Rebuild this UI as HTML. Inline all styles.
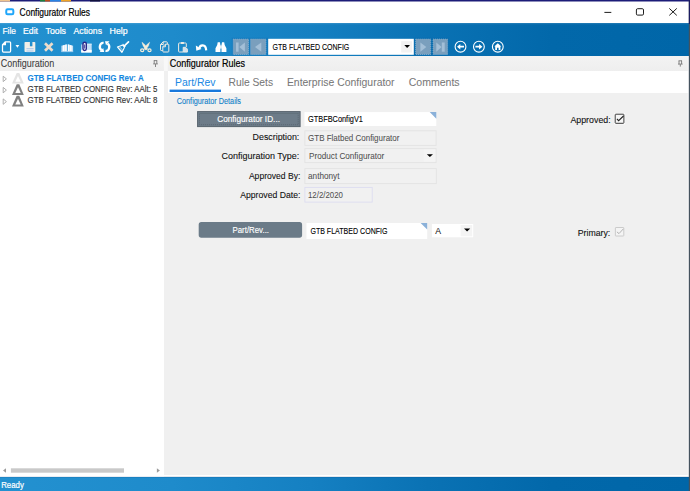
<!DOCTYPE html>
<html>
<head>
<meta charset="utf-8">
<title>Configurator Rules</title>
<style>
html,body{margin:0;padding:0;}
body{width:690px;height:491px;overflow:hidden;position:relative;background:#f0f0f0;font-family:"Liberation Sans",sans-serif;}
.a{position:absolute;}
#title{left:0;top:0;width:690px;height:23.5px;background:#fff;}
#blue{left:0;top:23.3px;width:690px;height:32.4px;background:linear-gradient(90deg,#2391d0 0%,#1e8bcb 25%,#1580c2 45%,#0a72b4 62%,#0268aa 80%,#0066a8 100%);}
#status{left:0;top:476.5px;width:690px;height:14.5px;background:linear-gradient(90deg,#2391d0 0%,#1e8bcb 25%,#1580c2 45%,#0a72b4 62%,#0268aa 80%,#0066a8 100%);}
#hdr{left:0;top:55.7px;width:690px;height:15.3px;background:linear-gradient(180deg,#f3f3f3,#eeeeee);}
#leftp{left:0;top:71px;width:163.9px;height:405.5px;background:#fff;}
#tabs{left:168px;top:71px;width:522px;height:22.2px;background:#fff;}
#svg{left:0;top:0;}
</style>
</head>
<body>
<div id="title" class="a"></div>
<div id="blue" class="a"></div>
<div id="hdr" class="a"></div>
<div id="leftp" class="a"></div>
<div id="tabs" class="a"></div>
<div id="status" class="a"></div>

<svg id="svg" class="a" width="690" height="491" viewBox="0 0 690 491">
<!-- desktop strip at top -->
<g id="desk">
<rect x="0" y="0" width="690" height="1.5" fill="#1c1c78"/>
<rect x="0" y="0" width="10" height="1.5" fill="#f0c48c"/>
<rect x="40" y="0" width="5" height="1.5" fill="#20803c"/>
<rect x="45" y="0" width="5" height="1.5" fill="#b8501c"/>
<rect x="50" y="0" width="11" height="1.5" fill="#2a84e4"/>
<rect x="61" y="0" width="10" height="1.5" fill="#f0a424"/>
<rect x="90" y="0" width="10" height="1.5" fill="#10103c"/>
</g>
<!-- right edge strip -->

<rect x="0" y="23.3" width="690" height="0.9" fill="#fff" opacity="0.16"/>
<!-- title icon -->
<rect x="6.25" y="9.35" width="7.1" height="4.9" rx="1.3" fill="#fff" stroke="#1fa6fa" stroke-width="2.0"/>
<!-- window controls -->
<g stroke="#111" stroke-width="0.95" fill="none">
<path d="M604.4 12.4H611.3"/>
<rect x="636.4" y="8.7" width="7.1" height="6.4" rx="1.2"/>
<path d="M669.3 8.4L676.8 15.4M676.8 8.4L669.3 15.4"/>
</g>

<!-- TOOLBAR ICONS -->
<g id="tb">
<!-- new -->
<path d="M5.4 41.8H9.6Q10.6 41.8 10.6 42.8V51Q10.6 52 9.6 52H3.5Q2.5 52 2.5 51V44.7Z M5.4 41.8V44.7H2.5" fill="none" stroke="#fff" stroke-width="1.25" stroke-linejoin="round"/>
<path d="M15.5 45.1H19.3L17.4 47.8Z" fill="#fff"/>
<!-- save -->
<g>
<rect x="24.5" y="42" width="10.8" height="10.1" rx="0.8" fill="#f2eee7"/>
<rect x="29.9" y="42" width="2.5" height="4.3" fill="#238fce"/>
<rect x="26.4" y="47.7" width="7.2" height="4.4" fill="#eef3f8"/>
<path d="M26.4 48.7H33.6M26.4 51H33.6" stroke="#a3c4e3" stroke-width="1.1"/>
</g>
<!-- delete X -->
<path d="M45 43.3L52.5 50.8M52.5 43.3L45 50.8" stroke="#eddccb" stroke-width="2.7" fill="none"/>
<!-- book -->
<g>
<path d="M61.4 45.7L66.9 44.2V51.3H61.4Z" fill="#c4e0f6"/>
<path d="M73.1 45.7L67.6 44.2V51.3H73.1Z" fill="#c4e0f6"/>
<path d="M63 45.4L64.5 45V51.2H63Z M65.2 44.8L66.6 44.5V51.2H65.2Z M68 44.5L69.4 44.8V51.2H68Z M70.1 45L71.6 45.4V51.2H70.1Z" fill="#fff"/>
<rect x="61.2" y="51.2" width="12" height="0.9" fill="#b4d6f2"/>
</g>
<!-- attachment -->
<g>
<rect x="81.2" y="44.4" width="10.5" height="8.1" fill="#c4dff7"/>
<rect x="87" y="43.6" width="4.7" height="1.2" fill="#e8f2fb"/>
<rect x="81.2" y="49.9" width="10.5" height="2.6" fill="#fff"/>
<rect x="83" y="42.2" width="3.3" height="8.3" rx="1.65" fill="#fff" stroke="#26268c" stroke-width="1.4"/>
<path d="M84.65 44.5V48.6" stroke="#29298e" stroke-width="0.9"/>
</g>
<!-- refresh -->
<g fill="none" stroke="#fff" stroke-width="2.3">
<path d="M103.6 42.9A3.3 3.9 0 0 0 101.6 50.2"/>
<path d="M105.5 50.9A3.3 3.9 0 0 0 107.5 43.6"/>
</g>
<path d="M99.6 52H104.2L103.2 48Z" fill="#fff"/>
<path d="M105 41.3H109.5L106 45.3Z" fill="#fff"/>
<!-- broom -->
<g fill="none" stroke="#fff" stroke-linecap="round" stroke-linejoin="round">
<path d="M128.5 41.9L124.6 45.7" stroke-width="1.7"/>
<path d="M123.2 44.2L125.4 46.6L124.4 47.6L122.2 45.2Z" fill="#fff" stroke-width="0.6"/>
<path d="M122.2 45.2L117.4 46.9L121.9 52.4L124.4 47.6" stroke-width="1.1"/>
<path d="M120.3 47.2L122.8 50.2M118.9 47.1L121.7 50.6" stroke-width="0.6" opacity="0.8"/>
</g>
<!-- scissors -->
<g fill="none" stroke="#f5edda">
<path d="M141.9 42Q145.2 44 147.7 49L146.2 49.9Q142.5 46.6 141.9 42Z" fill="#f5edda" stroke-width="0.3"/>
<path d="M149.8 42Q146.5 44 144 49L145.5 49.9Q149.2 46.6 149.8 42Z" fill="#f5edda" stroke-width="0.3"/>
<ellipse cx="142.2" cy="50.3" rx="1.6" ry="1.4" stroke-width="1.15"/>
<ellipse cx="149.5" cy="50.3" rx="1.6" ry="1.4" stroke-width="1.15"/>
</g>
<!-- copy -->
<g fill="none" stroke="#f1ece3" stroke-width="1" stroke-linejoin="round">
<path d="M163.2 41.8H166.6Q167.3 41.8 167.3 42.5V44 M160.5 44.5L163.2 41.8V44.5H160.5V49.8Q160.5 50.5 161.2 50.5H162.6"/>
<path d="M165.4 44.2H168.1Q168.8 44.2 168.8 44.9V51.3Q168.8 52 168.1 52H163.5Q162.8 52 162.8 51.3V46.8Z M165.4 44.2V46.8H162.8"/>
</g>
<!-- paste -->
<g fill="none" stroke="#f1ece3" stroke-width="1" stroke-linejoin="round">
<path d="M183 52H179.3Q178.6 52 178.6 51.3V43.7Q178.6 43 179.3 43H185.6Q186.3 43 186.3 43.7V47"/>
<rect x="180.9" y="41.9" width="3.1" height="2" rx="0.6" fill="#f1ece3" stroke="none"/>
<path d="M183.2 47.3H185.6L187.4 49.1V52.1H183.2Z" fill="#cfe2f2" stroke-width="0.9"/>
</g>
<!-- undo -->
<path d="M199.2 48.8C199.8 44.4 205.8 43.4 206.2 50.4" fill="none" stroke="#fff" stroke-width="2.2"/>
<path d="M195.8 45.6L201.6 48.9L196.3 50.7Z" fill="#fff"/>
<!-- binoculars -->
<g fill="#fff">
<path d="M217.7 42.3H219.9L220.4 45V52H215.5V48.2L217.2 45Z"/>
<path d="M222 42.3H224.2L224.7 45L226.4 48.2V52H221.5V45Z"/>
<rect x="220.2" y="45.4" width="1.5" height="3.2"/>
</g>
<!-- nav backing -->
<rect x="231.8" y="37.8" width="36.4" height="17.9" fill="#1173b6" opacity="0.55"/>
<rect x="413.8" y="37.8" width="35.2" height="17.9" fill="#0b6aac" opacity="0.55"/>
<!-- nav buttons -->
<g fill="#7a9fbd" stroke="#93b7d3" stroke-width="0.8" stroke-dasharray="1 1">
<rect x="233.2" y="39.1" width="15.3" height="15.4"/>
<rect x="250.6" y="39.1" width="15.3" height="15.4"/>
<rect x="415.7" y="39.1" width="15" height="15.4"/>
<rect x="433.1" y="39.1" width="14.5" height="15.4"/>
</g>
<g fill="#a3bfd7">
<rect x="236" y="42.5" width="2.6" height="9.2"/>
<path d="M244.9 42.5V51.7L239.3 47.1Z"/>
<path d="M261.3 42.5V51.7L255 47.1Z"/>
<path d="M420.4 42.5V51.7L426.3 47.1Z"/>
<path d="M436.3 42.5V51.7L441.6 47.1Z"/>
<rect x="441.8" y="42.5" width="2.9" height="9.2"/>
</g>
<!-- combo -->
<rect x="268.2" y="38.8" width="145.6" height="16" fill="#fff"/>
<rect x="401.2" y="41.2" width="10.8" height="11.3" fill="#f2f2f2"/>
<path d="M404.3 45H410L407.15 48Z" fill="#000"/>
<!-- circles -->
<g fill="none" stroke="#fff" stroke-width="1.1">
<circle cx="460.5" cy="46.7" r="5.4"/>
<circle cx="478.9" cy="46.7" r="5.4"/>
<circle cx="497.8" cy="46.7" r="5.4"/>
</g>
<path d="M457 46.7L460.3 43.9V45.8H464V47.6H460.3V49.5Z" fill="#fff"/>
<path d="M482.4 46.7L479.1 43.9V45.8H475.4V47.6H479.1V49.5Z" fill="#fff"/>
<path d="M497.8 43.2L501.3 46.4H500.4V50H498.6V47.8H497V50H495.2V46.4H494.3Z" fill="#fff"/>
</g>

<!-- header pins -->
<rect x="163.9" y="56" width="3.9" height="15" fill="#f8f8f8"/>
<g fill="none" stroke="#6a6a6a" stroke-width="0.8">
<path d="M154.2 60.6V63.8M156.8 60.6V63.8M153.8 60.6H157.2M153.2 63.9H157.8M155.5 64.1V67"/>
<path d="M679 60.8V64M681.6 60.8V64M678.6 60.8H682M678 64.1H682.6M680.3 64.3V66.6"/>
</g>

<!-- tree -->
<g fill="none" stroke="#a6a6a6" stroke-width="0.9" stroke-linejoin="round">
<path d="M3.2 76.2V81.6L6.4 78.9Z"/>
<path d="M3.2 87.4V92.8L6.4 90.1Z"/>
<path d="M3.2 98.9V104.3L6.4 101.6Z"/>
</g>
<g>
<path d="M16.7 73.1H19.3L23.8 83.6H12Z" fill="#e4e4e4"/><path d="M18 76.1L20.7 81.7H15.3Z" fill="#fff"/>
<path d="M16.7 84.2H19.3L23.8 94.9H12Z" fill="#808080"/><path d="M18 87.2L20.7 93.0H15.3Z" fill="#fff"/>
<path d="M16.7 95.8H19.3L23.8 106.5H12Z" fill="#808080"/><path d="M18 98.8L20.7 104.6H15.3Z" fill="#fff"/>
</g>

<!-- tab underline -->
<rect x="169.6" y="89.6" width="51.4" height="2.4" fill="#1878dc"/>

<!-- form: button 1 -->
<rect x="197.6" y="111.6" width="102.5" height="15" fill="#6d7c89" stroke="#57636d" stroke-width="1"/>
<rect x="199.5" y="113.5" width="98.7" height="11.2" fill="none" stroke="#3c444c" stroke-width="0.6" stroke-dasharray="1 1" opacity="0.6"/>
<!-- fields -->
<rect x="304.5" y="112.1" width="131.8" height="13.9" fill="#fff"/>
<path d="M429.7 112.1H436.3V118.8Z" fill="#8bb1d9"/>
<rect x="304.9" y="130.8" width="131.2" height="14.6" fill="#f1f1f1" stroke="#e3e3e3" stroke-width="0.9"/>
<rect x="304.9" y="148.6" width="131.2" height="14" fill="#f1f1f1" stroke="#e3e3e3" stroke-width="0.9"/>
<rect x="423.7" y="149.6" width="11.6" height="12" fill="#f4f4f4"/>
<path d="M426.8 154.2H433L429.9 157Z" fill="#000"/>
<rect x="304.9" y="168.6" width="131.4" height="15" fill="#f1f1f1" stroke="#e3e3e3" stroke-width="0.9"/>
<rect x="304.9" y="187.4" width="67.3" height="14.7" fill="#f1f1f1" stroke="#dcdcf0" stroke-width="0.9"/>
<!-- button 2 -->
<rect x="198.7" y="222.1" width="103.4" height="15.6" rx="2.6" fill="#6b7b88"/>
<rect x="306.5" y="223" width="120.7" height="16" fill="#fff"/>
<path d="M420.6 223H427.2V229.6Z" fill="#8bb1d9"/>
<rect x="431.9" y="224" width="41.3" height="13.3" fill="#fff"/>
<rect x="460.6" y="225" width="11.6" height="11.3" fill="#f4f4f4"/>
<path d="M464 228.6H470.2L467.1 231.4Z" fill="#000"/>
<!-- checkboxes -->
<rect x="613.9" y="112.9" width="11.3" height="11.7" rx="1" fill="#fff" opacity="0.85"/>
<rect x="615.2" y="114.2" width="8.7" height="9.1" rx="0.6" fill="#f6f6f6" stroke="#3a3a3a" stroke-width="1"/>
<path d="M616.9 118.9L618.6 120.7L623.5 116" fill="none" stroke="#222" stroke-width="1.05"/>
<rect x="615.4" y="227.5" width="8.4" height="8.5" rx="0.5" fill="#f4f4f4" stroke="#c6c6c6" stroke-width="0.9"/>
<path d="M616.9 231.9L619 233.6L623.3 228.9" fill="none" stroke="#b4b4b4" stroke-width="1"/>

<!-- scrollbar -->
<rect x="10.9" y="468.3" width="113.1" height="4.4" fill="#c9c9c9"/>
<path d="M6 468.2V472.8L3 470.5Z" fill="#9c9c9c"/>
<path d="M156.9 468.2V472.8L159.9 470.5Z" fill="#9c9c9c"/>
<!-- status top line -->
<rect x="164" y="475" width="525" height="1.6" fill="#fff"/>
<rect x="687.8" y="56" width="1" height="420.6" fill="#fff"/>
<rect x="0" y="476.6" width="690" height="0.9" fill="#003070" opacity="0.22"/>
<rect x="688.8" y="0" width="1.2" height="491" fill="#45525e"/>
<rect x="688.8" y="0" width="1.2" height="24" fill="#1c1c60"/>
</svg>


<svg class="a" style="left:0;top:0" width="690" height="491" viewBox="0 0 690 491" font-family="Liberation Sans, sans-serif">
<text x="19.6" y="15.5" font-size="10.4" fill="#000" textLength="70.4" lengthAdjust="spacingAndGlyphs" stroke="#000" stroke-width="0.2">Configurator Rules</text>
<text x="2.5" y="34.0" font-size="9.8" fill="#fff" textLength="13.5" lengthAdjust="spacingAndGlyphs" stroke="#fff" stroke-width="0.22">File</text>
<text x="23.0" y="34.0" font-size="9.8" fill="#fff" textLength="15.0" lengthAdjust="spacingAndGlyphs" stroke="#fff" stroke-width="0.22">Edit</text>
<text x="45.5" y="34.0" font-size="9.8" fill="#fff" textLength="20.5" lengthAdjust="spacingAndGlyphs" stroke="#fff" stroke-width="0.22">Tools</text>
<text x="73.6" y="34.0" font-size="9.8" fill="#fff" textLength="28.4" lengthAdjust="spacingAndGlyphs" stroke="#fff" stroke-width="0.22">Actions</text>
<text x="109.6" y="34.0" font-size="9.8" fill="#fff" textLength="18.1" lengthAdjust="spacingAndGlyphs" stroke="#fff" stroke-width="0.22">Help</text>
<text x="272.5" y="49.8" font-size="8.4" fill="#000" textLength="76.8" lengthAdjust="spacingAndGlyphs" stroke="#000" stroke-width="0.1">GTB FLATBED CONFIG</text>
<text x="0.8" y="66.8" font-size="10.5" fill="#3c3c3c" textLength="53.5" lengthAdjust="spacingAndGlyphs" stroke="#3c3c3c" stroke-width="0.08">Configuration</text>
<text x="169.8" y="66.8" font-size="10.3" fill="#000" textLength="75.2" lengthAdjust="spacingAndGlyphs" stroke="#000" stroke-width="0.2">Configurator Rules</text>
<text x="27.5" y="80.8" font-size="9.4" fill="#1487e0" textLength="116.2" lengthAdjust="spacingAndGlyphs" font-weight="700" stroke="#1487e0" stroke-width="0.1">GTB FLATBED CONFIG Rev: A</text>
<text x="27.5" y="92.1" font-size="9.4" fill="#333" textLength="130.0" lengthAdjust="spacingAndGlyphs" stroke="#333" stroke-width="0.15">GTB FLATBED CONFIG Rev: AAlt: 5</text>
<text x="27.5" y="103.4" font-size="9.4" fill="#333" textLength="130.0" lengthAdjust="spacingAndGlyphs" stroke="#333" stroke-width="0.15">GTB FLATBED CONFIG Rev: AAlt: 8</text>
<text x="175.0" y="86.2" font-size="11.1" fill="#2088e4" textLength="40.5" lengthAdjust="spacingAndGlyphs" stroke="#2088e4" stroke-width="0.02">Part/Rev</text>
<text x="228.5" y="86.2" font-size="11.1" fill="#787878" textLength="44.6" lengthAdjust="spacingAndGlyphs" stroke="#787878" stroke-width="0.05">Rule Sets</text>
<text x="286.9" y="86.2" font-size="11.1" fill="#787878" textLength="107.7" lengthAdjust="spacingAndGlyphs" stroke="#787878" stroke-width="0.05">Enterprise Configurator</text>
<text x="408.7" y="86.2" font-size="11.1" fill="#787878" textLength="50.9" lengthAdjust="spacingAndGlyphs" stroke="#787878" stroke-width="0.05">Comments</text>
<text x="176.8" y="104.0" font-size="8.3" fill="#1080c8" textLength="64.2" lengthAdjust="spacingAndGlyphs" stroke="#1080c8" stroke-width="0.1">Configurator Details</text>
<text x="217.2" y="122.2" font-size="9.3" fill="#fff" textLength="62.8" lengthAdjust="spacingAndGlyphs" stroke="#fff" stroke-width="0.15">Configurator ID...</text>
<text x="252.6" y="139.7" font-size="9.7" fill="#111" textLength="46.7" lengthAdjust="spacingAndGlyphs" stroke="#111" stroke-width="0.1">Description:</text>
<text x="221.6" y="159.0" font-size="9.7" fill="#111" textLength="77.7" lengthAdjust="spacingAndGlyphs" stroke="#111" stroke-width="0.1">Configuration Type:</text>
<text x="248.9" y="178.6" font-size="9.7" fill="#111" textLength="51.5" lengthAdjust="spacingAndGlyphs" stroke="#111" stroke-width="0.1">Approved By:</text>
<text x="240.2" y="198.0" font-size="9.7" fill="#111" textLength="60.2" lengthAdjust="spacingAndGlyphs" stroke="#111" stroke-width="0.1">Approved Date:</text>
<text x="308.1" y="122.2" font-size="8.4" fill="#000" textLength="54.8" lengthAdjust="spacingAndGlyphs" stroke="#000" stroke-width="0.1">GTBFBConfigV1</text>
<text x="308.1" y="141.1" font-size="8.4" fill="#505050" textLength="91.3" lengthAdjust="spacingAndGlyphs" stroke="#505050" stroke-width="0.05">GTB Flatbed Configurator</text>
<text x="309.1" y="158.8" font-size="8.4" fill="#505050" textLength="75.1" lengthAdjust="spacingAndGlyphs" stroke="#505050" stroke-width="0.05">Product Configurator</text>
<text x="308.0" y="179.3" font-size="8.4" fill="#505050" textLength="31.5" lengthAdjust="spacingAndGlyphs" stroke="#505050" stroke-width="0.05">anthonyt</text>
<text x="308.0" y="198.2" font-size="8.4" fill="#505050" textLength="35.0" lengthAdjust="spacingAndGlyphs" stroke="#505050" stroke-width="0.05">12/2/2020</text>
<text x="232.5" y="233.3" font-size="9.3" fill="#fff" textLength="36.5" lengthAdjust="spacingAndGlyphs" stroke="#fff" stroke-width="0.15">Part/Rev...</text>
<text x="310.4" y="234.4" font-size="8.4" fill="#000" textLength="77.1" lengthAdjust="spacingAndGlyphs" stroke="#000" stroke-width="0.1">GTB FLATBED CONFIG</text>
<text x="435.2" y="233.6" font-size="8.4" fill="#111" textLength="5.8" lengthAdjust="spacingAndGlyphs" stroke="#111" stroke-width="0.05">A</text>
<text x="570.4" y="123.4" font-size="9.8" fill="#111" textLength="40.3" lengthAdjust="spacingAndGlyphs" stroke="#111" stroke-width="0.1">Approved:</text>
<text x="577.7" y="236.2" font-size="9.8" fill="#111" textLength="32.6" lengthAdjust="spacingAndGlyphs" stroke="#111" stroke-width="0.1">Primary:</text>
<text x="1.2" y="487.6" font-size="9.4" fill="#fff" textLength="22.7" lengthAdjust="spacingAndGlyphs" stroke="#fff" stroke-width="0.2">Ready</text>
</svg>
</body>
</html>
